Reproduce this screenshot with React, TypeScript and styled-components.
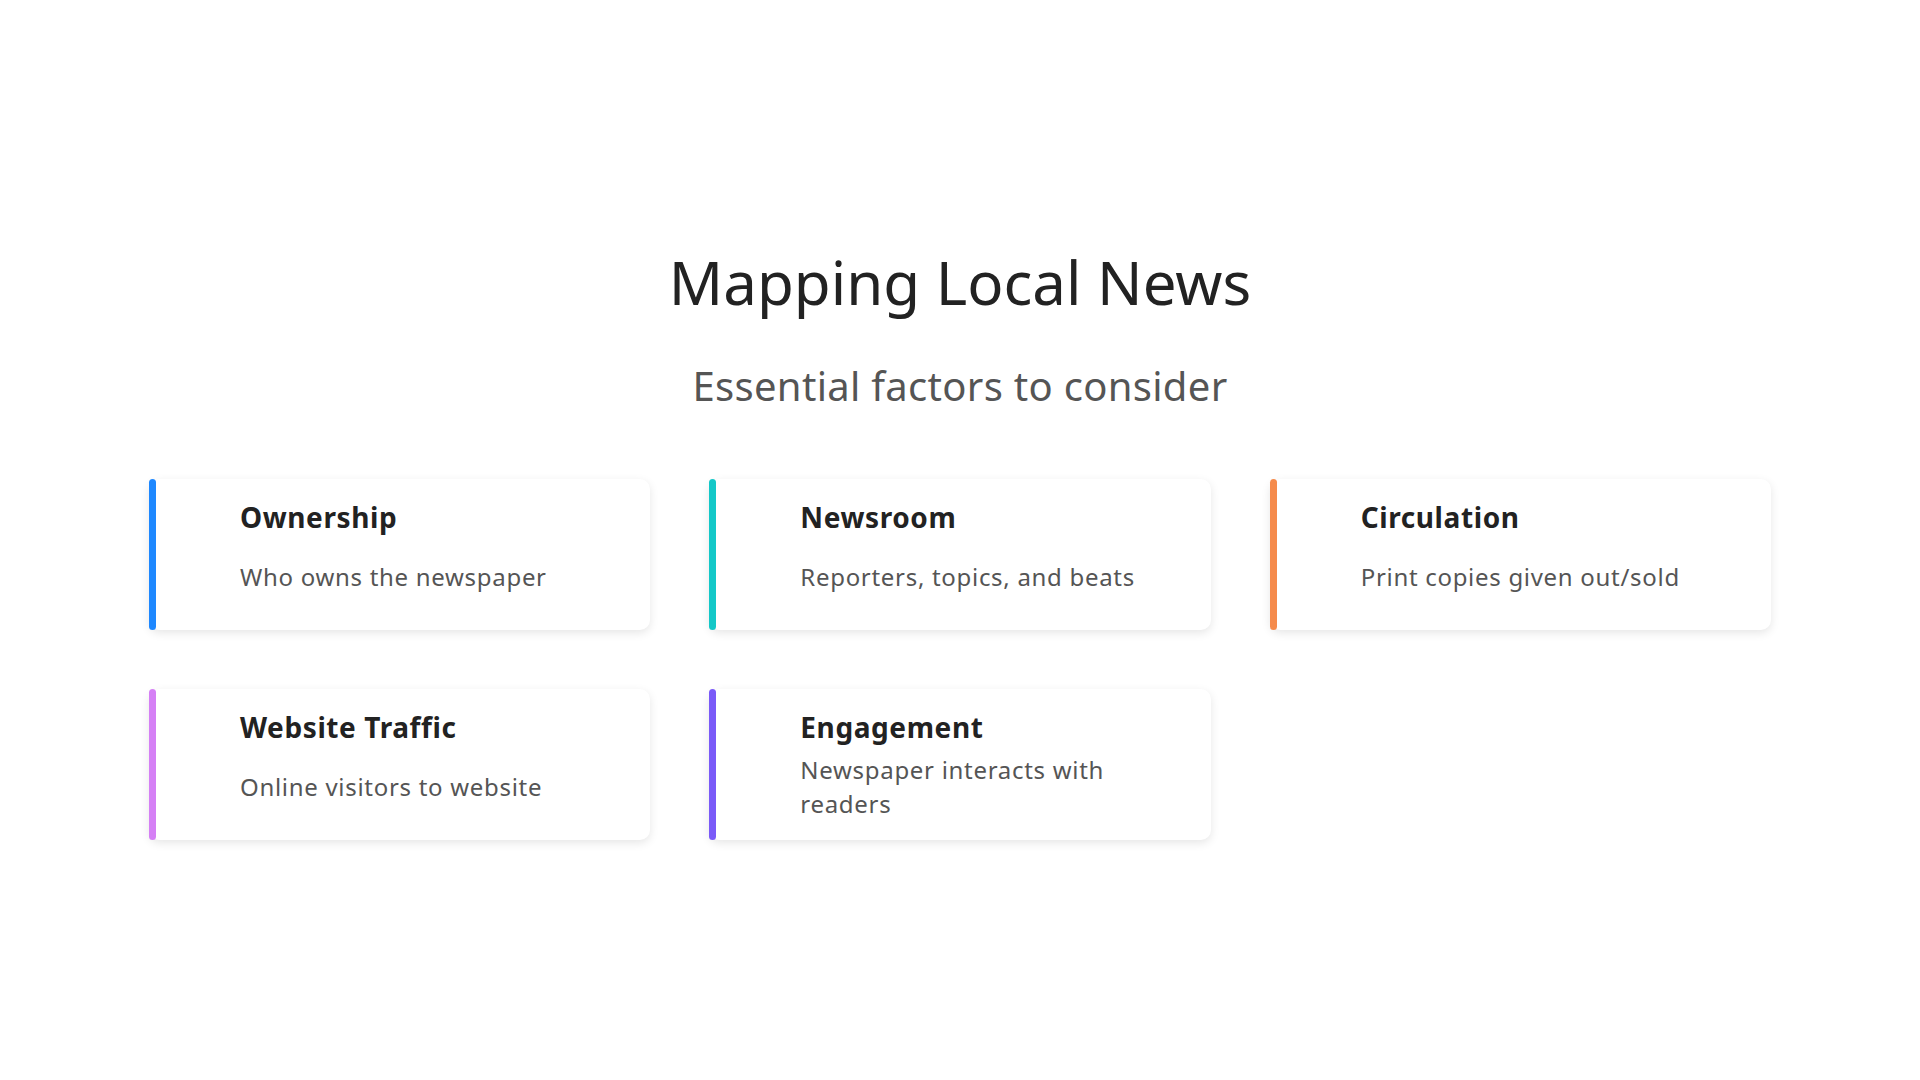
import styled, { createGlobalStyle } from "styled-components";

const GlobalStyle = createGlobalStyle`
  body {
    margin: 0;
    background: #ffffff;
    font-family: "Noto Sans", "Open Sans", sans-serif;
  }
`;

const Page = styled.div`
  width: 1920px;
  height: 1080px;
  display: flex;
  flex-direction: column;
  align-items: center;
  padding-top: 240px;
  box-sizing: border-box;
`;

const Title = styled.h1`
  margin: 0;
  font-size: 60px;
  font-weight: 400;
  color: #222;
  line-height: 84px;
`;

const Subtitle = styled.h2`
  margin: 34px 0 0;
  font-size: 40px;
  font-weight: 400;
  color: #555;
  line-height: 56px;
  letter-spacing: 0.3px;
`;

const Grid = styled.div`
  margin-top: 65px;
  width: 1622px;
  display: grid;
  grid-template-columns: repeat(3, 1fr);
  gap: 59px;
`;

const Card = styled.div`
  position: relative;
  height: 151px;
  background: #fff;
  border-radius: 10px;
  box-shadow: 0 3px 10px rgba(0, 0, 0, 0.1);
  padding: 20px 60px 0 91px;
  box-sizing: border-box;
`;

const Bar = styled.div<{ $color: string }>`
  position: absolute;
  left: 0;
  top: 0;
  bottom: 0;
  width: 7px;
  border-radius: 4px;
  background: ${(p) => p.$color};
`;

const CardTitle = styled.div`
  font-size: 28px;
  font-weight: 700;
  color: #222;
  line-height: 36px;
  letter-spacing: 0.6px;
`;

const CardDesc = styled.div`
  margin-top: 7px;
  height: 70px;
  display: flex;
  align-items: center;
  font-size: 24px;
  color: #555;
  line-height: 34px;
  letter-spacing: 0.7px;
`;

const items = [
  { t: "Ownership", d: "Who owns the newspaper", c: "#1e88ff" },
  { t: "Newsroom", d: "Reporters, topics, and beats", c: "#14c8c8" },
  { t: "Circulation", d: "Print copies given out/sold", c: "#f58b4c" },
  { t: "Website Traffic", d: "Online visitors to website", c: "#d580f5" },
  { t: "Engagement", d: "Newspaper interacts with readers", c: "#7a5af8" },
];

export default function App() {
  return (
    <>
      <GlobalStyle />
      <Page>
        <Title>Mapping Local News</Title>
        <Subtitle>Essential factors to consider</Subtitle>
        <Grid>
          {items.map((i) => (
            <Card key={i.t}>
              <Bar $color={i.c} />
              <CardTitle>{i.t}</CardTitle>
              <CardDesc>{i.d}</CardDesc>
            </Card>
          ))}
        </Grid>
      </Page>
    </>
  );
}
